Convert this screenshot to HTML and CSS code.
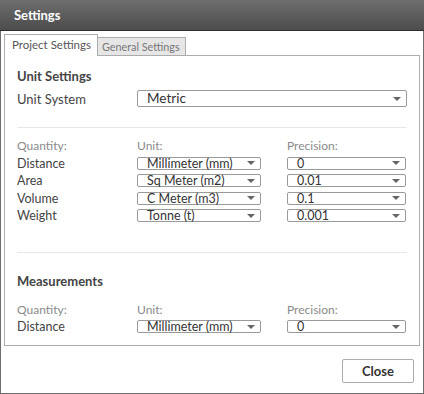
FILE: index.html
```html
<!DOCTYPE html>
<html lang="en">
<head>
    <meta charset="UTF-8">
    <title>Settings</title>
    <link rel="stylesheet" href="styles.css">
</head>
<body>
    <div class="window">
        <div class="titlebar">Settings</div>
        <div class="tabs">
            <div class="tab active">Project Settings</div>
            <div class="tab">General Settings</div>
        </div>
        <div class="panel">
            <h2>Unit Settings</h2>
            <div class="system-row">
                <span class="label">Unit System</span>
                <div class="select tall"><span>Metric</span><i class="arrow"></i></div>
            </div>
            <div class="sep first"></div>
            <div class="grid units">
                <span class="head">Quantity:</span>
                <span class="head">Unit:</span>
                <span class="head">Precision:</span>

                <span class="label">Distance</span>
                <div class="select"><span>Millimeter (mm)</span><i class="arrow"></i></div>
                <div class="select"><span>0</span><i class="arrow"></i></div>

                <span class="label">Area</span>
                <div class="select"><span>Sq Meter (m2)</span><i class="arrow"></i></div>
                <div class="select"><span>0.01</span><i class="arrow"></i></div>

                <span class="label">Volume</span>
                <div class="select"><span>C Meter (m3)</span><i class="arrow"></i></div>
                <div class="select"><span>0.1</span><i class="arrow"></i></div>

                <span class="label">Weight</span>
                <div class="select"><span>Tonne (t)</span><i class="arrow"></i></div>
                <div class="select"><span>0.001</span><i class="arrow"></i></div>
            </div>
            <div class="sep second"></div>
            <h2 class="measure">Measurements</h2>
            <div class="grid measures">
                <span class="head">Quantity:</span>
                <span class="head">Unit:</span>
                <span class="head">Precision:</span>

                <span class="label">Distance</span>
                <div class="select"><span>Millimeter (mm)</span><i class="arrow"></i></div>
                <div class="select"><span>0</span><i class="arrow"></i></div>
            </div>
        </div>
        <div class="footer">
            <button class="close">Close</button>
        </div>
    </div>
</body>
</html>
```

FILE: styles.css
```css
* {
    margin: 0;
    padding: 0;
    box-sizing: border-box;
    font-family: Lato, "Liberation Sans", Arial, sans-serif;
}
body {
    background: #fff;
    width: 424px;
    height: 394px;
    overflow: hidden;
}
.window {
    width: 424px;
    height: 394px;
    border: 1px solid #6e6e6e;
    border-top: none;
    background: #fff;
}
.titlebar {
    height: 31px;
    margin: 0 -1px;
    padding: 7px 14px 0;
    background: linear-gradient(to bottom, #6e6e6e, #4c4c4c);
    border-bottom: 1px solid #2e2e2e;
    color: #fff;
    font-size: 13px;
    font-weight: bold;
}
.tabs {
    display: flex;
    align-items: flex-end;
    height: 24px;
    padding-left: 3px;
}
.tab {
    height: 18px;
    padding: 0 5px 0 4px;
    border: 1px solid #acacac;
    border-bottom: none;
    background: #e6e6e6;
    color: #777;
    font-size: 10.8px;
    line-height: 18px;
}
.tab.active {
    position: relative;
    z-index: 1;
    height: 22px;
    margin-bottom: -1px;
    padding: 0 6px 0 7px;
    background: #fff;
    color: #555;
    font-size: 11.5px;
    line-height: 19px;
}
.tab.active + .tab {
    border-left: none;
}
.panel {
    height: 291px;
    margin: 0 3px;
    padding: 12px 12px 0;
    border: 1px solid #acacac;
}
h2 {
    height: 17px;
    color: #444;
    font-size: 13px;
    font-weight: bold;
    line-height: 17px;
}
.system-row {
    display: grid;
    grid-template-columns: 120px 1fr;
    align-items: center;
    height: 17px;
    margin-top: 5px;
}
.label {
    color: #444;
    font-size: 12.5px;
}
.system-row .label {
    font-size: 13px;
}
.head {
    color: #8a8a8a;
    font-size: 12px;
}
.select {
    display: flex;
    align-items: center;
    justify-content: space-between;
    width: 124px;
    height: 13px;
    padding: 0 5px 0 9px;
    border: 1px solid #9a9a9a;
    border-radius: 2px;
    color: #333;
    font-size: 12.5px;
    line-height: 11px;
}
.grid .select:nth-child(3n) {
    width: 119px;
}
.select.tall {
    width: auto;
    height: 17px;
    font-size: 13.5px;
}
.arrow {
    width: 0;
    height: 0;
    border-left: 4px solid transparent;
    border-right: 4px solid transparent;
    border-top: 4px solid #666;
}
.sep {
    height: 1px;
    background: #e6e6e6;
}
.sep.first {
    margin-top: 20px;
}
.sep.second {
    margin-top: 28px;
}
.grid {
    display: grid;
    grid-template-columns: 107px 137px 119px;
    column-gap: 13px;
    align-items: center;
}
.units {
    margin-top: 8px;
    grid-template-rows: 18px 18px 17px 18px 17px;
}
.measures {
    margin-top: 11px;
    grid-template-rows: 17px 17px;
}
h2.measure {
    margin-top: 20px;
}
.footer {
    display: flex;
    justify-content: flex-end;
    padding: 13px 9px 0;
}
.close {
    width: 72px;
    height: 24px;
    border: 1px solid #acacac;
    border-radius: 2px;
    background: #fff;
    color: #333;
    font-family: Lato, "Liberation Sans", Arial, sans-serif;
    font-size: 13px;
    font-weight: bold;
}
```
